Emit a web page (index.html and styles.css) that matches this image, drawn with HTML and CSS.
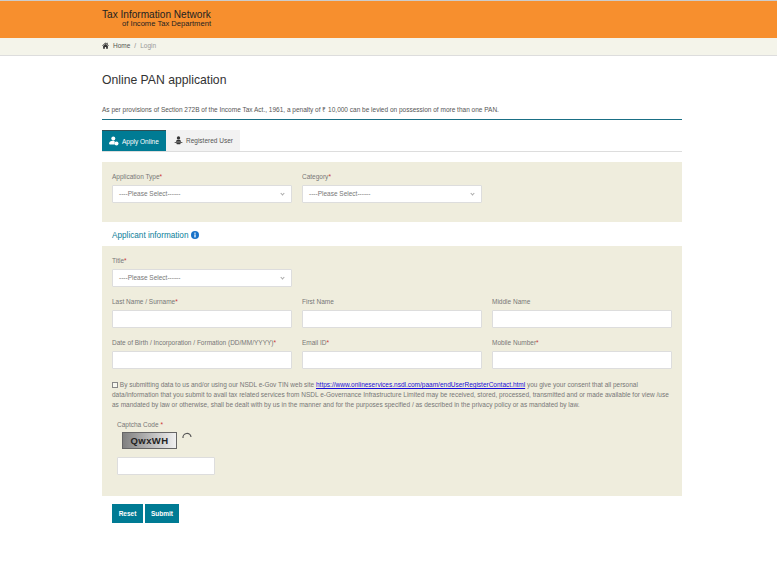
FILE: index.html
```html
<!DOCTYPE html>
<html lang="en">
<head>
<meta charset="utf-8">
<title>Online PAN application</title>
<link rel="stylesheet" href="styles.css">
</head>
<body>
<header class="top">
  <div class="wrap">
    <div class="logo"><div class="logo-main">Tax Information Network</div><div class="logo-sub">of Income Tax Department</div></div>
  </div>
</header>
<nav class="crumbs">
  <div class="wrap crumb-row">
    <svg class="home" viewBox="0 0 10 10" width="7" height="7"><path d="M5 .8 0 5.2l.6.6L5 2l4.400 3.800.6-.6L8 3.500V1H6.800v1.400zM1.600 5.800V9.500h2.500V7h1.800v2.500h2.500V5.800L5 2.900z" fill="#333"/></svg>
    <span class="crumb-home">Home</span><span class="crumb-sep">/</span><span class="crumb-cur">Login</span>
  </div>
</nav>
<main class="wrap">
  <h1>Online PAN application</h1>
  <p class="notice">As per provisions of Section 272B of the Income Tax Act., 1961, a penalty of ₹ 10,000 can be levied on possession of more than one PAN.</p>
  <div class="tabs">
    <div class="tab active">
      <svg viewBox="0 0 14 14" width="10" height="10"><circle cx="6" cy="3.500" r="2.800" fill="#fff"/><path d="M0 11c0-3 2.500-4.500 5-4.500s3 1 3 1v4.500H1z" fill="#fff"/><circle cx="10.500" cy="10.500" r="2.800" fill="#fff"/></svg>
      <span>Apply Online</span>
    </div>
    <div class="tab other">
      <svg viewBox="0 0 14 14" width="9" height="9"><circle cx="7" cy="3" r="2.600" fill="#333"/><path d="M3 9c0-2 2-3 4-3s4 1 4 3z" fill="#333"/><path d="M1 9.500h12v1.200H1z" fill="#333"/><path d="M3.500 11h7l-1 2h-5z" fill="#333"/></svg>
      <span>Registered User</span>
    </div>
  </div>

  <section class="panel panel-first">
    <div class="grid">
      <div class="field"><label>Application Type<i>*</i></label><div class="select">----Please Select------<b></b></div></div>
      <div class="field"><label>Category<i>*</i></label><div class="select">----Please Select------<b></b></div></div>
    </div>
  </section>

  <h2>Applicant information
    <svg viewBox="0 0 10 10" width="8" height="8"><circle cx="5" cy="5" r="5" fill="#1a73c8"/><rect x="4.200" y="4.200" width="1.600" height="3.800" fill="#fff"/><rect x="4.200" y="2" width="1.600" height="1.500" fill="#fff"/></svg>
  </h2>

  <section class="panel panel-second">
    <div class="grid">
      <div class="field"><label>Title<i>*</i></label><div class="select">----Please Select------<b></b></div></div>
      <div class="field empty"></div>
      <div class="field empty"></div>
      <div class="field"><label>Last Name / Surname<i>*</i></label><div class="input"></div></div>
      <div class="field"><label>First Name</label><div class="input"></div></div>
      <div class="field"><label>Middle Name</label><div class="input"></div></div>
      <div class="field"><label>Date of Birth / Incorporation / Formation (DD/MM/YYYY)<i>*</i></label><div class="input"></div></div>
      <div class="field"><label>Email ID<i>*</i></label><div class="input"></div></div>
      <div class="field"><label>Mobile Number<i>*</i></label><div class="input"></div></div>
    </div>
    <p class="consent"><span class="check"></span> By submitting data to us and/or using our NSDL e-Gov TIN web site <a href="#">https://www.onlineservices.nsdl.com/paam/endUserRegisterContact.html</a> you give your consent that all personal data/information that you submit to avail tax related services from NSDL e-Governance Infrastructure Limited may be received, stored, processed, transmitted and or made available for view /use as mandated by law or otherwise, shall be dealt with by us in the manner and for the purposes specified / as described in the privacy policy or as mandated by law.</p>
    <div class="captcha">
      <label>Captcha Code <i>*</i></label>
      <div class="captcha-row">
        <div class="captcha-img">QwxWH</div>
        <svg viewBox="0 0 10 10" width="10" height="10"><path d="M1 6A4 4 0 0 1 9 5" fill="none" stroke="#555" stroke-width="1.200"/></svg>
      </div>
      <div class="input captcha-input"></div>
    </div>
  </section>

  <div class="actions"><button class="btn" type="button">Reset</button><button class="btn" type="button">Submit</button></div>
</main>
</body>
</html>
```
FILE: styles.css
```css
* { box-sizing: border-box; }
html, body { margin: 0; padding: 0; }
body { background: #fff; font-family: "Liberation Sans", Arial, sans-serif; color: #666; height: 580px; overflow: hidden; }
.wrap { width: 580px; margin-left: 102px; }
.top { background: #f78f2e; height: 38px; border-top: 1px solid #ccc; }
.logo { padding-top: 9px; color: #222; line-height: 1; }
.logo-main { font-size: 10.100px; width: 109px; white-space: nowrap; }
.logo-sub { font-size: 7.600px; width: 109px; text-align: right; margin-top: 0; white-space: nowrap; }
.crumbs { background: #f4f4ea; height: 18px; border-bottom: 1px solid #ddd; font-size: 6.500px; }
.crumb-row { display: flex; align-items: center; height: 15px; }
.home { margin-right: 4px; }
.crumb-home { color: #555; }
.crumb-sep { margin: 0 4px; color: #888; }
.crumb-cur { color: #999; }
h1 { font-size: 12.200px; font-weight: 400; color: #333; margin: 16px 0 0; line-height: 16px; }
.notice { font-size: 6.500px; color: #555; margin: 17px 0 0; line-height: 9px; padding-bottom: 5px; border-bottom: 1px solid #1a6f85; white-space: nowrap; }
.tabs { display: flex; margin-top: 10px; height: 22px; border-bottom: 1px solid #ddd; }
.tab { display: flex; align-items: center; gap: 3px; background: #f2f2f2; font-size: 6.500px; color: #555; height: 21px; white-space: nowrap; }
.tab.active { background: #007b94; color: #fff; width: 64px; padding-left: 7px; border-top: 1px solid #2f4f55; }
.tab.other { width: 74px; padding-left: 8px; }
.panel { background: #efeddd; }
.panel-first { margin-top: 10px; height: 60px; padding: 10px 10px 0; }
.panel-second { height: 250px; padding: 10px 10px 0; }
.grid { display: grid; grid-template-columns: repeat(3, 180px); column-gap: 10px; row-gap: 10px; }
.field label, .captcha label { display: block; font-size: 6.500px; color: #777; line-height: 9px; margin-bottom: 4px; white-space: nowrap; }
i { color: #c33; font-style: normal; }
.select, .input { height: 18px; background: #fff; border: 1px solid #ddd; border-radius: 1px; }
.select { position: relative; font-size: 6.500px; color: #777; line-height: 16px; padding-left: 6px; }
.select b { position: absolute; right: 7px; top: 6px; width: 3px; height: 3px; border-right: 1px solid #aaa; border-bottom: 1px solid #aaa; transform: rotate(45deg); }
h2 { font-size: 8.200px; font-weight: 400; color: #0b7e99; margin: 0; height: 24px; padding: 9px 0 0 10px; line-height: 10px; }
h2 svg { vertical-align: -1px; }
.consent { margin: 11px 0 0; font-size: 6.500px; line-height: 10px; color: #777; }
.check { display: inline-block; width: 6px; height: 6px; border: 1px solid #888; background: #f7f7ef; vertical-align: -0.500px; }
.consent a { color: #1a0dd8; text-decoration: underline; }
.captcha { margin: 10px 0 0 5px; }
.captcha label { margin-bottom: 3px; }
.captcha-row { display: flex; gap: 5px; margin-left: 5px; height: 17px; }
.captcha-img { width: 55px; height: 17px; background: linear-gradient(90deg, #808080, #f0f0f0); border: 1px solid #666; font-weight: 700; font-size: 9.500px; color: #222; line-height: 15px; text-align: center; letter-spacing: 0.400px; }
.captcha-input { width: 98px; margin-top: 8px; }
.actions { display: flex; gap: 2px; margin: 8px 0 0 10px; }
.btn { height: 19px; min-width: 31px; padding: 0 6px; border: 0; background: #007b94; color: #fff; font-family: inherit; font-size: 6.500px; font-weight: 700; }
```
